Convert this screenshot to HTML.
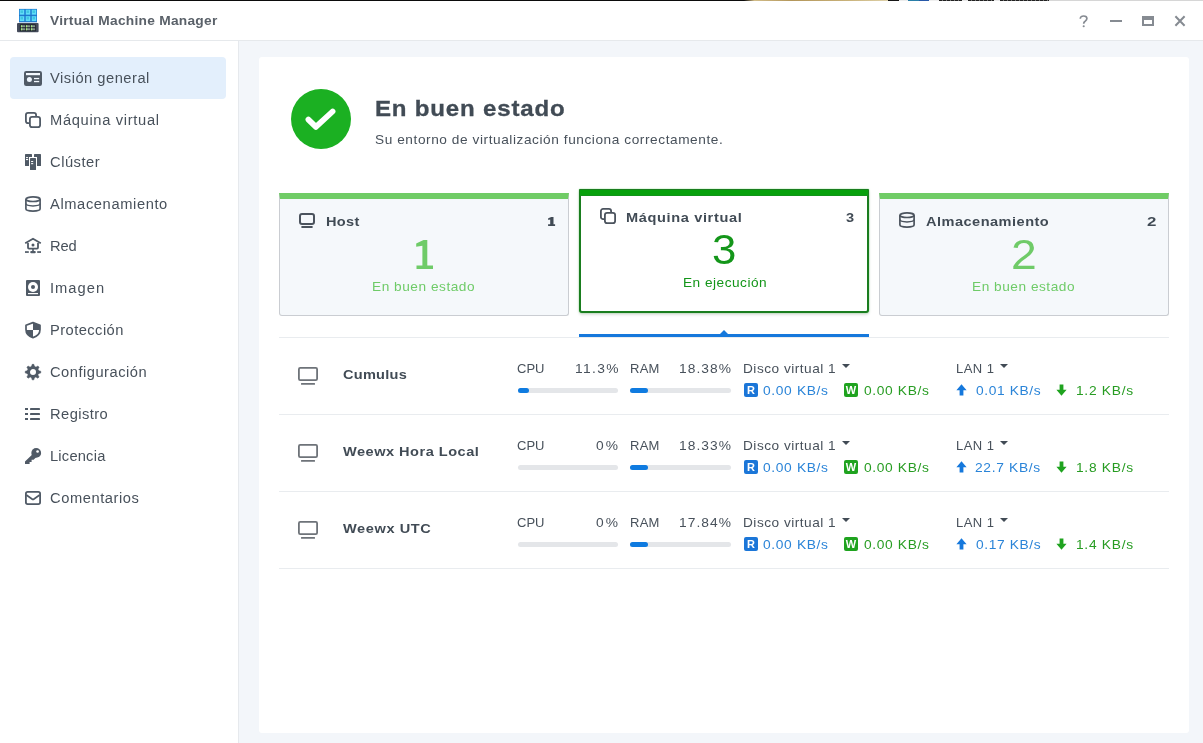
<!DOCTYPE html>
<html>
<head>
<meta charset="utf-8">
<title>Virtual Machine Manager</title>
<style>
*{box-sizing:border-box;margin:0;padding:0}
html,body{width:1203px;height:743px;overflow:hidden;background:#fff}
body{position:relative;font-family:"Liberation Sans",sans-serif;color:#414b55;font-size:13px}
.abs{position:absolute}
.x{position:absolute;white-space:nowrap;line-height:1;transform-origin:0 0;will-change:transform}
#strip{left:0;top:0;width:1203px;height:1px;background:#0b0b0b}
#strip i{position:absolute;top:0;height:1px;display:block}
#titlebar{left:0;top:1px;width:1203px;height:40px;background:#fff;border-bottom:1px solid #e6e9ec}
#sidebar{left:0;top:41px;width:239px;height:702px;background:#fff;border-right:1px solid #e6e9ed}
.nav{position:absolute;left:10px;width:216px;height:42px;border-radius:4px}
.nav.sel{background:#e3effc}
.nav svg{position:absolute;left:12px;top:11px;width:20px;height:20px;overflow:visible}
#main{left:239px;top:41px;width:964px;height:702px;background:#f3f6fa}
#panel{left:259px;top:57px;width:930px;height:676px;background:#fff;border-radius:3px}
#okc{left:291px;top:89px;width:60px;height:60px}
.card{position:absolute;width:290px;background:#f5f8fb;border:1px solid #cacdd2;border-top:6px solid #70cc66;border-radius:0 0 3px 3px}
.card.sel{background:#fff;border:2px solid #1a7d1f;border-top:1px solid #1a7d1f;box-shadow:0 0 1.5px #6fd66f,0 2px 3px rgba(0,0,0,.13);border-radius:1px 1px 3px 3px}
.card.sel:before{content:'';position:absolute;left:-1px;right:-1px;top:0;height:5px;background:#07a10c;border-bottom:1px solid #12931a}
#blueline{left:579px;top:334px;width:290px;height:3px;background:#1578dc}
#bluetri{left:720px;top:330px;width:0;height:0;border-left:4px solid transparent;border-right:4px solid transparent;border-bottom:4px solid #1578dc}
.rsep{position:absolute;left:279px;width:890px;height:1px;background:#e9ecef}
.bar{position:absolute;height:5px;border-radius:2.5px;background:#e4e6e9}
.bar i{position:absolute;left:0;top:0;height:5px;border-radius:2.5px;background:#0f7be0;display:block}
.badge{will-change:transform;position:absolute;width:14px;height:14px;border-radius:2px;color:#fff;font-weight:700;font-size:11px;line-height:14px;text-align:center}
.caret{position:absolute;width:0;height:0;border-left:4.1px solid transparent;border-right:4.1px solid transparent;border-top:4.2px solid #414b55}
</style>
</head>
<body>
<div id="strip" class="abs"><i style="left:744px;width:10px;background:linear-gradient(90deg,#0b0b0b,#cdb783)"></i><i style="left:754px;width:134px;background:linear-gradient(90deg,#d2bd8a 0,#b3965a 28%,#c9b27a 70%,#ddd0a8 100%)"></i><i style="left:888px;width:11px;background:#161616"></i><i style="left:899px;width:9px;background:#ececec"></i><i style="left:908px;width:11px;background:#2a7fa8"></i><i style="left:919px;width:10px;background:#2858a8"></i><i style="left:929px;width:10px;background:#efefef"></i><i style="left:939px;width:23px;background:repeating-linear-gradient(90deg,#222 0 3px,#777 3px 4px)"></i><i style="left:962px;width:6px;background:#e8e8e8"></i><i style="left:968px;width:26px;background:repeating-linear-gradient(90deg,#222 0 3px,#777 3px 4px)"></i><i style="left:994px;width:6px;background:#e8e8e8"></i><i style="left:1000px;width:49px;background:repeating-linear-gradient(90deg,#222 0 3px,#777 3px 4px)"></i><i style="left:1049px;width:154px;background:#d6d6d6"></i></div>
<div id="titlebar" class="abs"></div>
<svg class="abs" style="left:16px;top:8px;width:24px;height:25px" viewBox="0 0 24 25"><rect x="3" y=".9" width="18" height="13.4" fill="#1e68bd"/><rect x="3.30" y="1.20" width="5.4" height="5.9" fill="#2b9be6"/><rect x="3.90" y="1.80" width="4.2" height="4.7" fill="#62ddf7"/><rect x="4.60" y="2.40" width="2.4" height="2.6" fill="#3fc6e2"/><rect x="9.30" y="1.20" width="5.4" height="5.9" fill="#2b9be6"/><rect x="9.90" y="1.80" width="4.2" height="4.7" fill="#62ddf7"/><rect x="10.60" y="2.40" width="2.4" height="2.6" fill="#3fc6e2"/><rect x="15.30" y="1.20" width="5.4" height="5.9" fill="#2b9be6"/><rect x="15.90" y="1.80" width="4.2" height="4.7" fill="#62ddf7"/><rect x="16.60" y="2.40" width="2.4" height="2.6" fill="#3fc6e2"/><rect x="3.30" y="7.70" width="5.4" height="5.9" fill="#2b9be6"/><rect x="3.90" y="8.30" width="4.2" height="4.7" fill="#62ddf7"/><rect x="4.60" y="8.90" width="2.4" height="2.6" fill="#3fc6e2"/><rect x="9.30" y="7.70" width="5.4" height="5.9" fill="#2b9be6"/><rect x="9.90" y="8.30" width="4.2" height="4.7" fill="#62ddf7"/><rect x="10.60" y="8.90" width="2.4" height="2.6" fill="#3fc6e2"/><rect x="15.30" y="7.70" width="5.4" height="5.9" fill="#2b9be6"/><rect x="15.90" y="8.30" width="4.2" height="4.7" fill="#62ddf7"/><rect x="16.60" y="8.90" width="2.4" height="2.6" fill="#3fc6e2"/><rect x="1" y="15" width="21.6" height="9.2" rx="1" fill="#454c5b"/><rect x="3.8" y="16.3" width="16" height="7" rx=".6" fill="#1b2029"/><rect x="4.90" y="17.30" width="4.2" height="2" rx=".3" fill="#84928d"/><rect x="4.90" y="17.30" width="1.2" height="2" fill="#a4ee7a"/><rect x="9.90" y="17.30" width="4.2" height="2" rx=".3" fill="#84928d"/><rect x="9.90" y="17.30" width="1.2" height="2" fill="#a4ee7a"/><rect x="14.90" y="17.30" width="4.2" height="2" rx=".3" fill="#84928d"/><rect x="14.90" y="17.30" width="1.2" height="2" fill="#a4ee7a"/><rect x="4.90" y="20.30" width="4.2" height="2" rx=".3" fill="#84928d"/><rect x="4.90" y="20.30" width="1.2" height="2" fill="#a4ee7a"/><rect x="9.90" y="20.30" width="4.2" height="2" rx=".3" fill="#84928d"/><rect x="9.90" y="20.30" width="1.2" height="2" fill="#a4ee7a"/><rect x="14.90" y="20.30" width="4.2" height="2" rx=".3" fill="#84928d"/><rect x="14.90" y="20.30" width="1.2" height="2" fill="#a4ee7a"/></svg>
<svg class="abs" style="left:1079px;top:15px;width:10px;height:13px" viewBox="0 0 10 13"><path d="M1.3 3.7 C1.3 1.7 2.8 1 4.6 1 C6.5 1 7.9 1.9 7.9 3.6 C7.9 5.1 6.9 5.7 5.8 6.5 C4.9 7.1 4.7 7.6 4.7 8.8" fill="none" stroke="#868b92" stroke-width="1.7"/><circle cx="4.7" cy="11.2" r="1.05" fill="#868b92"/></svg><div class="abs" style="left:1110px;top:20px;width:12px;height:2px;background:#868b92"></div><div class="abs" style="left:1142px;top:16px;width:12px;height:10px;border:2px solid #868b92;border-top-width:4px"></div><svg class="abs" style="left:1174px;top:15px;width:12px;height:12px" viewBox="0 0 12 12"><path d="M1.4 1.2 L10.6 10.8 M10.6 1.2 L1.4 10.8" stroke="#868b92" stroke-width="2" fill="none"/></svg>
<div id="sidebar" class="abs"></div>
<div class="nav sel" style="top:57px"><svg viewBox="0 0 20 20"><rect x="2" y="3" width="18" height="15" rx="2.2" fill="#505a66"/><rect x="4" y="5" width="14" height="2.2" fill="#f4f9ff"/><circle cx="7.4" cy="11.6" r="2.5" fill="#eef5fd"/><rect x="12" y="9.9" width="5.2" height="1.3" fill="#f4f9ff"/><rect x="12" y="12.9" width="5.2" height="1.3" fill="#f4f9ff"/></svg></div>
<div class="nav" style="top:99px"><svg viewBox="0 0 20 20"><rect x="3.9" y="2.9" width="10.2" height="10.2" rx="2.2" fill="none" stroke="#505a66" stroke-width="1.8"/><rect x="7.9" y="6.9" width="10.2" height="10.2" rx="2.2" fill="#fff" stroke="#505a66" stroke-width="1.8"/></svg></div>
<div class="nav" style="top:141px"><svg viewBox="0 0 20 20"><rect x="3" y="2" width="7" height="12" rx=".6" fill="#505a66"/><rect x="12" y="2" width="7" height="12" rx=".6" fill="#505a66"/><rect x="7" y="5" width="8" height="14" fill="#fff"/><rect x="8" y="6" width="6" height="12" rx=".6" fill="#505a66"/><rect x="4" y="5.1" width="2.1" height="1" fill="#fff"/><rect x="4" y="7" width="2.1" height="1.1" fill="#fff"/><rect x="9.1" y="9" width="2.1" height="1" fill="#fff"/><rect x="9.1" y="11.1" width="2.1" height="1.1" fill="#fff"/></svg></div>
<div class="nav" style="top:183px"><svg viewBox="0 0 20 20"><path d="M3.9 5.2 V14.8 C3.9 16.2 7 17.1 11 17.1 S18.1 16.2 18.1 14.8 V5.2" fill="none" stroke="#505a66" stroke-width="1.7"/><ellipse cx="11" cy="5.2" rx="7.1" ry="2.3" fill="none" stroke="#505a66" stroke-width="1.7"/><path d="M3.9 9.6 C3.9 11 7 11.9 11 11.9 S18.1 11 18.1 9.6" fill="none" stroke="#505a66" stroke-width="1.5"/></svg></div>
<div class="nav" style="top:225px"><svg viewBox="0 0 20 20"><path d="M3.2 7.2 L11 2.8 L18.8 7.2" fill="none" stroke="#505a66" stroke-width="1.8" stroke-linejoin="miter"/><path d="M6 7 V11.6 Q6 12.6 7 12.6 H15 Q16 12.6 16 11.6 V7" fill="none" stroke="#505a66" stroke-width="1.8"/><circle cx="11" cy="9" r="1.5" fill="#505a66"/><rect x="10.2" y="12.6" width="1.6" height="3" fill="#505a66"/><rect x="3" y="15.2" width="3.8" height="1.7" fill="#505a66"/><rect x="15.2" y="15.2" width="3.8" height="1.7" fill="#505a66"/><rect x="8.2" y="14.9" width="5.6" height="2.4" rx="1.2" fill="#505a66"/></svg></div>
<div class="nav" style="top:267px"><svg viewBox="0 0 20 20"><rect x="4" y="2" width="14" height="16" rx="1" fill="#505a66"/><circle cx="11" cy="9" r="5" fill="#fff"/><circle cx="11" cy="9" r="2" fill="#505a66"/><rect x="6" y="15" width="10" height="1.2" fill="#fff"/></svg></div>
<div class="nav" style="top:309px"><svg viewBox="0 0 20 20"><path d="M11 2.6 L18 5.2 V9.5 C18 13.6 15 16.4 11 17.6 C7 16.4 4 13.6 4 9.5 V5.2 Z" fill="#fff" stroke="#505a66" stroke-width="1.7" stroke-linejoin="round"/><path d="M11 2.6 L18 5.2 V10 H11 Z" fill="#505a66"/><path d="M11 10 V17.6 C7.4 16.5 4.4 14 4 10 Z" fill="#505a66"/></svg></div>
<div class="nav" style="top:351px"><svg viewBox="0 0 20 20"><path d="M9.45 5.10 L10.10 2.35 L11.90 2.35 L12.55 5.10 Z M13.44 5.47 L15.84 3.98 L17.12 5.26 L15.63 7.66 Z M16.00 8.55 L18.75 9.20 L18.75 11.00 L16.00 11.65 Z M15.63 12.54 L17.12 14.94 L15.84 16.22 L13.44 14.73 Z M12.55 15.10 L11.90 17.85 L10.10 17.85 L9.45 15.10 Z M8.56 14.73 L6.16 16.22 L4.88 14.94 L6.37 12.54 Z M6.00 11.65 L3.25 11.00 L3.25 9.20 L6.00 8.55 Z M6.37 7.66 L4.88 5.26 L6.16 3.98 L8.56 5.47 Z" fill="#505a66" stroke="#505a66" stroke-width=".5" stroke-linejoin="round"/><circle cx="11" cy="10.1" r="4.5" fill="none" stroke="#505a66" stroke-width="3"/></svg></div>
<div class="nav" style="top:393px"><svg viewBox="0 0 20 20"><rect x="3" y="4" width="3" height="2" fill="#505a66"/><rect x="8" y="4" width="10" height="2" rx=".4" fill="#505a66"/><rect x="3" y="9" width="3" height="2" fill="#505a66"/><rect x="8" y="9" width="10" height="2" rx=".4" fill="#505a66"/><rect x="3" y="14" width="3" height="2" fill="#505a66"/><rect x="8" y="14" width="10" height="2" rx=".4" fill="#505a66"/></svg></div>
<div class="nav" style="top:435px"><svg viewBox="0 0 20 20"><circle cx="14.2" cy="6.9" r="4.9" fill="#505a66"/><path d="M11.6 7.2 L3 15.4 V18 H7.6 V15.9 H9.6 V13.8 H11.6 L14.4 11 Z" fill="#505a66"/><circle cx="15.6" cy="5.5" r="1.35" fill="#fff"/></svg></div>
<div class="nav" style="top:477px"><svg viewBox="0 0 20 20"><rect x="3.9" y="3.9" width="14.2" height="12.2" rx="1.8" fill="none" stroke="#505a66" stroke-width="1.8"/><path d="M4.4 7 L10 11 Q11 11.7 12 11 L17.6 7" fill="none" stroke="#505a66" stroke-width="1.6"/></svg></div>
<div id="main" class="abs"></div>
<div id="panel" class="abs"></div>
<svg id="okc" class="abs" viewBox="0 0 60 60"><circle cx="30" cy="30" r="30" fill="#1bb022"/><path d="M17.4 30.6 L24.9 37.9 L41.6 22.5" fill="none" stroke="#fff" stroke-width="5.7" stroke-linecap="round" stroke-linejoin="round"/></svg>
<div class="card" style="left:279px;top:193px;height:123px"></div>
<div class="card sel" style="left:579px;top:189px;height:124px"></div>
<div class="card" style="left:879px;top:193px;height:123px"></div>
<svg class="abs" style="left:299px;top:213px;width:16px;height:16px;overflow:visible" viewBox="0 0 16 16"><rect x="1.0" y="1.0" width="14" height="10" rx="2" fill="none" stroke="#4b535d" stroke-width="2"/><rect x="2.4" y="13.1" width="11.2" height="2" rx=".5" fill="#4b535d"/></svg>
<svg class="abs" style="left:599px;top:207px;width:18px;height:18px" viewBox="0 0 18 18"><rect x="1.9" y="1.9" width="10.2" height="10.2" rx="2.2" fill="none" stroke="#4b535d" stroke-width="1.8"/><rect x="5.9" y="5.9" width="10.2" height="10.2" rx="2.2" fill="#fff" stroke="#4b535d" stroke-width="1.8"/></svg>
<svg class="abs" style="left:898px;top:211px;width:18px;height:18px" viewBox="0 0 18 18"><path d="M1.9 4.2 V13.8 C1.9 15.2 5 16.1 9 16.1 S16.1 15.2 16.1 13.8 V4.2" fill="none" stroke="#4b535d" stroke-width="1.7"/><ellipse cx="9" cy="4.2" rx="7.1" ry="2.3" fill="none" stroke="#4b535d" stroke-width="1.7"/><path d="M1.9 8.6 C1.9 10 5 10.9 9 10.9 S16.1 10 16.1 8.6" fill="none" stroke="#4b535d" stroke-width="1.5"/></svg>
<svg class="abs" style="left:410px;top:236px;width:30px;height:36px" viewBox="410 236 30 36"><path d="M427.3 239.9 H423.5 L416.2 243.5 V246.7 L422.4 245.7 V265.6 H416.5 V269.1 H433 V265.6 H427.3 Z" fill="#6fcb68"/></svg>
<svg class="abs" style="left:545px;top:214px;width:14px;height:14px" viewBox="545 214 14 14"><path d="M553.5 216.9 H551.3 L548.2 218.2 V219.9 L550.2 219.6 V224.3 H548.1 V226 H555.1 V224.3 H553.5 Z" fill="#414b55"/></svg>
<div class="abs" style="left:279px;top:337px;width:890px;height:1px;background:#e9ecef"></div><div id="blueline" class="abs"></div><div id="bluetri" class="abs"></div>
<div class="rsep" style="top:414px"></div>
<svg class="abs" style="left:298px;top:367px;width:20px;height:18px;overflow:visible" viewBox="0 0 20 18"><rect x="0.9" y="0.9" width="18.2" height="12.2" rx="1.3" fill="none" stroke="#6e7379" stroke-width="1.8"/><rect x="3.0" y="16.0" width="14.0" height="1.8" rx=".5" fill="#6e7379"/></svg>
<div class="bar" style="left:518px;width:100px;top:388px"><i style="width:11.3px"></i></div>
<div class="bar" style="left:630px;width:101px;top:388px"><i style="width:18.4px"></i></div>
<div class="caret" style="left:841.9px;top:363.8px"></div>
<div class="badge" style="left:744px;top:383px;background:#1b76d8">R</div>
<div class="badge" style="left:844px;top:383px;background:#1fa31f">W</div>
<div class="caret" style="left:999.85px;top:363.8px"></div>
<svg class="abs" style="left:956px;top:384px;width:11px;height:12px" viewBox="0 0 11 12"><path d="M5.5 0.3 L10.6 6.2 H7.4 V11.4 H3.6 V6.2 H0.4 Z" fill="#1578dc"/></svg>
<svg class="abs" style="left:1055.5px;top:384px;width:11px;height:12px" viewBox="0 0 11 12"><path d="M5.5 11.7 L10.6 5.8 H7.4 V0.6 H3.6 V5.8 H0.4 Z" fill="#1fa31f"/></svg>
<div class="rsep" style="top:491px"></div>
<svg class="abs" style="left:298px;top:444px;width:20px;height:18px;overflow:visible" viewBox="0 0 20 18"><rect x="0.9" y="0.9" width="18.2" height="12.2" rx="1.3" fill="none" stroke="#6e7379" stroke-width="1.8"/><rect x="3.0" y="16.0" width="14.0" height="1.8" rx=".5" fill="#6e7379"/></svg>
<div class="bar" style="left:518px;width:100px;top:465px"></div>
<div class="bar" style="left:630px;width:101px;top:465px"><i style="width:18.3px"></i></div>
<div class="caret" style="left:841.9px;top:440.8px"></div>
<div class="badge" style="left:744px;top:460px;background:#1b76d8">R</div>
<div class="badge" style="left:844px;top:460px;background:#1fa31f">W</div>
<div class="caret" style="left:999.85px;top:440.8px"></div>
<svg class="abs" style="left:956px;top:461px;width:11px;height:12px" viewBox="0 0 11 12"><path d="M5.5 0.3 L10.6 6.2 H7.4 V11.4 H3.6 V6.2 H0.4 Z" fill="#1578dc"/></svg>
<svg class="abs" style="left:1055.5px;top:461px;width:11px;height:12px" viewBox="0 0 11 12"><path d="M5.5 11.7 L10.6 5.8 H7.4 V0.6 H3.6 V5.8 H0.4 Z" fill="#1fa31f"/></svg>
<div class="rsep" style="top:568px"></div>
<svg class="abs" style="left:298px;top:521px;width:20px;height:18px;overflow:visible" viewBox="0 0 20 18"><rect x="0.9" y="0.9" width="18.2" height="12.2" rx="1.3" fill="none" stroke="#6e7379" stroke-width="1.8"/><rect x="3.0" y="16.0" width="14.0" height="1.8" rx=".5" fill="#6e7379"/></svg>
<div class="bar" style="left:518px;width:100px;top:542px"></div>
<div class="bar" style="left:630px;width:101px;top:542px"><i style="width:17.8px"></i></div>
<div class="caret" style="left:841.9px;top:517.8px"></div>
<div class="badge" style="left:744px;top:537px;background:#1b76d8">R</div>
<div class="badge" style="left:844px;top:537px;background:#1fa31f">W</div>
<div class="caret" style="left:999.85px;top:517.8px"></div>
<svg class="abs" style="left:956px;top:538px;width:11px;height:12px" viewBox="0 0 11 12"><path d="M5.5 0.3 L10.6 6.2 H7.4 V11.4 H3.6 V6.2 H0.4 Z" fill="#1578dc"/></svg>
<svg class="abs" style="left:1055.5px;top:538px;width:11px;height:12px" viewBox="0 0 11 12"><path d="M5.5 11.7 L10.6 5.8 H7.4 V0.6 H3.6 V5.8 H0.4 Z" fill="#1fa31f"/></svg>
<div class="x" id="ttl" style="left:50.30px;top:14.82px;font-size:12.5px;font-weight:700;letter-spacing:0.227px;color:#5a6169;transform:scaleX(1.1);">Virtual Machine Manager</div>
<div class="x" id="s0" style="left:50.00px;top:71.15px;font-size:14px;font-weight:400;letter-spacing:0.475px;color:#48515b;transform:scaleX(1.05);">Visión general</div>
<div class="x" id="s1" style="left:50.00px;top:113.15px;font-size:14px;font-weight:400;letter-spacing:0.634px;color:#48515b;transform:scaleX(1.05);">Máquina virtual</div>
<div class="x" id="s2" style="left:50.00px;top:155.15px;font-size:14px;font-weight:400;letter-spacing:0.489px;color:#48515b;transform:scaleX(1.05);">Clúster</div>
<div class="x" id="s3" style="left:50.00px;top:197.15px;font-size:14px;font-weight:400;letter-spacing:0.572px;color:#48515b;transform:scaleX(1.05);">Almacenamiento</div>
<div class="x" id="s4" style="left:50.00px;top:239.15px;font-size:14px;font-weight:400;letter-spacing:-0.165px;color:#48515b;transform:scaleX(1.05);">Red</div>
<div class="x" id="s5" style="left:50.00px;top:281.15px;font-size:14px;font-weight:400;letter-spacing:0.958px;color:#48515b;transform:scaleX(1.05);">Imagen</div>
<div class="x" id="s6" style="left:50.00px;top:323.15px;font-size:14px;font-weight:400;letter-spacing:0.414px;color:#48515b;transform:scaleX(1.05);">Protección</div>
<div class="x" id="s7" style="left:50.00px;top:365.15px;font-size:14px;font-weight:400;letter-spacing:0.465px;color:#48515b;transform:scaleX(1.05);">Configuración</div>
<div class="x" id="s8" style="left:50.00px;top:407.15px;font-size:14px;font-weight:400;letter-spacing:0.400px;color:#48515b;transform:scaleX(1.05);">Registro</div>
<div class="x" id="s9" style="left:50.00px;top:449.15px;font-size:14px;font-weight:400;letter-spacing:0.187px;color:#48515b;transform:scaleX(1.05);">Licencia</div>
<div class="x" id="s10" style="left:50.00px;top:491.15px;font-size:14px;font-weight:400;letter-spacing:0.535px;color:#48515b;transform:scaleX(1.05);">Comentarios</div>
<div class="x" id="h1" style="left:374.60px;top:98.57px;font-size:21.3px;font-weight:700;letter-spacing:0.711px;color:#414b55;transform:scaleX(1.13);-webkit-text-stroke:.3px #414b55">En buen estado</div>
<div class="x" id="sub" style="left:375.30px;top:132.70px;font-size:13px;font-weight:400;letter-spacing:0.543px;color:#48515b;transform:scaleX(1.05);">Su entorno de virtualización funciona correctamente.</div>
<div class="x" id="host" style="left:325.80px;top:214.70px;font-size:13px;font-weight:700;letter-spacing:0.311px;color:#414b55;transform:scaleX(1.12);">Host</div>
<div class="x" id="mv" style="left:625.90px;top:210.70px;font-size:13px;font-weight:700;letter-spacing:0.570px;color:#414b55;transform:scaleX(1.12);">Máquina virtual</div>
<div class="x" id="alm" style="left:926.00px;top:214.70px;font-size:13px;font-weight:700;letter-spacing:0.426px;color:#414b55;transform:scaleX(1.12);">Almacenamiento</div>
<div class="x" id="n3" style="left:846.19px;top:210.70px;font-size:13px;font-weight:700;letter-spacing:0.000px;color:#414b55;transform:scaleX(1.12);">3</div>
<div class="x" id="n2" style="left:1146.72px;top:214.70px;font-size:13px;font-weight:700;letter-spacing:0.000px;color:#414b55;transform:scaleX(1.3);">2</div>
<div class="x" id="big3" style="left:711.80px;top:229.22px;font-size:42.5px;font-weight:400;letter-spacing:0.000px;color:#14961a;transform:scaleX(1.03);">3</div>
<div class="x" id="big2" style="left:1011.45px;top:234.02px;font-size:42.5px;font-weight:400;letter-spacing:0.000px;color:#6fcb68;transform:scaleX(1.09);">2</div>
<div class="x" id="ebe1" style="left:372.29px;top:279.80px;font-size:13px;font-weight:400;letter-spacing:0.507px;color:#6fcb68;transform:scaleX(1.05);">En buen estado</div>
<div class="x" id="eej" style="left:682.66px;top:275.60px;font-size:13px;font-weight:400;letter-spacing:0.470px;color:#14961a;transform:scaleX(1.05);">En ejecución</div>
<div class="x" id="ebe2" style="left:972.29px;top:279.80px;font-size:13px;font-weight:400;letter-spacing:0.505px;color:#6fcb68;transform:scaleX(1.05);">En buen estado</div>
<div class="x" id="nm0" style="left:343.00px;top:368.00px;font-size:13px;font-weight:700;letter-spacing:0.227px;color:#414b55;transform:scaleX(1.12);">Cumulus</div>
<div class="x" id="cpu0" style="left:517.40px;top:362.00px;font-size:13px;font-weight:400;letter-spacing:0.020px;color:#48515b;transform:scaleX(1.0);">CPU</div>
<div class="x" id="cpuv0" style="left:574.88px;top:362.00px;font-size:13px;font-weight:400;letter-spacing:1.280px;color:#48515b;transform:scaleX(1.06);">11.3%</div>
<div class="x" id="ram0" style="left:629.70px;top:362.00px;font-size:13px;font-weight:400;letter-spacing:0.279px;color:#48515b;transform:scaleX(1.0);">RAM</div>
<div class="x" id="ramv0" style="left:679.08px;top:362.00px;font-size:13px;font-weight:400;letter-spacing:0.987px;color:#48515b;transform:scaleX(1.06);">18.38%</div>
<div class="x" id="dv0" style="left:742.90px;top:362.00px;font-size:13px;font-weight:400;letter-spacing:0.476px;color:#48515b;transform:scaleX(1.05);">Disco virtual 1</div>
<div class="x" id="rv0" style="left:762.90px;top:383.60px;font-size:13px;font-weight:400;letter-spacing:0.610px;color:#2a84d8;transform:scaleX(1.06);">0.00 KB/s</div>
<div class="x" id="wv0" style="left:864.10px;top:383.60px;font-size:13px;font-weight:400;letter-spacing:0.601px;color:#279c22;transform:scaleX(1.06);">0.00 KB/s</div>
<div class="x" id="lan0" style="left:956.00px;top:362.00px;font-size:13px;font-weight:400;letter-spacing:0.474px;color:#48515b;transform:scaleX(1.0);">LAN 1</div>
<div class="x" id="up0" style="left:976.35px;top:383.60px;font-size:13px;font-weight:400;letter-spacing:0.574px;color:#2a84d8;transform:scaleX(1.06);">0.01 KB/s</div>
<div class="x" id="dn0" style="left:1076.30px;top:383.60px;font-size:13px;font-weight:400;letter-spacing:0.670px;color:#279c22;transform:scaleX(1.06);">1.2 KB/s</div>
<div class="x" id="nm1" style="left:343.00px;top:445.00px;font-size:13px;font-weight:700;letter-spacing:0.440px;color:#414b55;transform:scaleX(1.12);">Weewx Hora Local</div>
<div class="x" id="cpu1" style="left:517.40px;top:439.00px;font-size:13px;font-weight:400;letter-spacing:0.020px;color:#48515b;transform:scaleX(1.0);">CPU</div>
<div class="x" id="cpuv1" style="left:596.19px;top:439.00px;font-size:13px;font-weight:400;letter-spacing:1.989px;color:#48515b;transform:scaleX(1.06);">0%</div>
<div class="x" id="ram1" style="left:629.70px;top:439.00px;font-size:13px;font-weight:400;letter-spacing:0.279px;color:#48515b;transform:scaleX(1.0);">RAM</div>
<div class="x" id="ramv1" style="left:679.08px;top:439.00px;font-size:13px;font-weight:400;letter-spacing:0.987px;color:#48515b;transform:scaleX(1.06);">18.33%</div>
<div class="x" id="dv1" style="left:742.90px;top:439.00px;font-size:13px;font-weight:400;letter-spacing:0.476px;color:#48515b;transform:scaleX(1.05);">Disco virtual 1</div>
<div class="x" id="rv1" style="left:762.90px;top:460.60px;font-size:13px;font-weight:400;letter-spacing:0.610px;color:#2a84d8;transform:scaleX(1.06);">0.00 KB/s</div>
<div class="x" id="wv1" style="left:864.10px;top:460.60px;font-size:13px;font-weight:400;letter-spacing:0.601px;color:#279c22;transform:scaleX(1.06);">0.00 KB/s</div>
<div class="x" id="lan1" style="left:956.00px;top:439.00px;font-size:13px;font-weight:400;letter-spacing:0.474px;color:#48515b;transform:scaleX(1.0);">LAN 1</div>
<div class="x" id="up1" style="left:975.45px;top:460.60px;font-size:13px;font-weight:400;letter-spacing:0.649px;color:#2a84d8;transform:scaleX(1.06);">22.7 KB/s</div>
<div class="x" id="dn1" style="left:1076.30px;top:460.60px;font-size:13px;font-weight:400;letter-spacing:0.670px;color:#279c22;transform:scaleX(1.06);">1.8 KB/s</div>
<div class="x" id="nm2" style="left:343.00px;top:522.00px;font-size:13px;font-weight:700;letter-spacing:0.535px;color:#414b55;transform:scaleX(1.12);">Weewx UTC</div>
<div class="x" id="cpu2" style="left:517.40px;top:516.00px;font-size:13px;font-weight:400;letter-spacing:0.020px;color:#48515b;transform:scaleX(1.0);">CPU</div>
<div class="x" id="cpuv2" style="left:596.19px;top:516.00px;font-size:13px;font-weight:400;letter-spacing:1.989px;color:#48515b;transform:scaleX(1.06);">0%</div>
<div class="x" id="ram2" style="left:629.70px;top:516.00px;font-size:13px;font-weight:400;letter-spacing:0.279px;color:#48515b;transform:scaleX(1.0);">RAM</div>
<div class="x" id="ramv2" style="left:679.08px;top:516.00px;font-size:13px;font-weight:400;letter-spacing:0.987px;color:#48515b;transform:scaleX(1.06);">17.84%</div>
<div class="x" id="dv2" style="left:742.90px;top:516.00px;font-size:13px;font-weight:400;letter-spacing:0.476px;color:#48515b;transform:scaleX(1.05);">Disco virtual 1</div>
<div class="x" id="rv2" style="left:762.90px;top:537.60px;font-size:13px;font-weight:400;letter-spacing:0.610px;color:#2a84d8;transform:scaleX(1.06);">0.00 KB/s</div>
<div class="x" id="wv2" style="left:864.10px;top:537.60px;font-size:13px;font-weight:400;letter-spacing:0.601px;color:#279c22;transform:scaleX(1.06);">0.00 KB/s</div>
<div class="x" id="lan2" style="left:956.00px;top:516.00px;font-size:13px;font-weight:400;letter-spacing:0.474px;color:#48515b;transform:scaleX(1.0);">LAN 1</div>
<div class="x" id="up2" style="left:976.35px;top:537.60px;font-size:13px;font-weight:400;letter-spacing:0.574px;color:#2a84d8;transform:scaleX(1.06);">0.17 KB/s</div>
<div class="x" id="dn2" style="left:1076.30px;top:537.60px;font-size:13px;font-weight:400;letter-spacing:0.670px;color:#279c22;transform:scaleX(1.06);">1.4 KB/s</div>
</body>
</html>
